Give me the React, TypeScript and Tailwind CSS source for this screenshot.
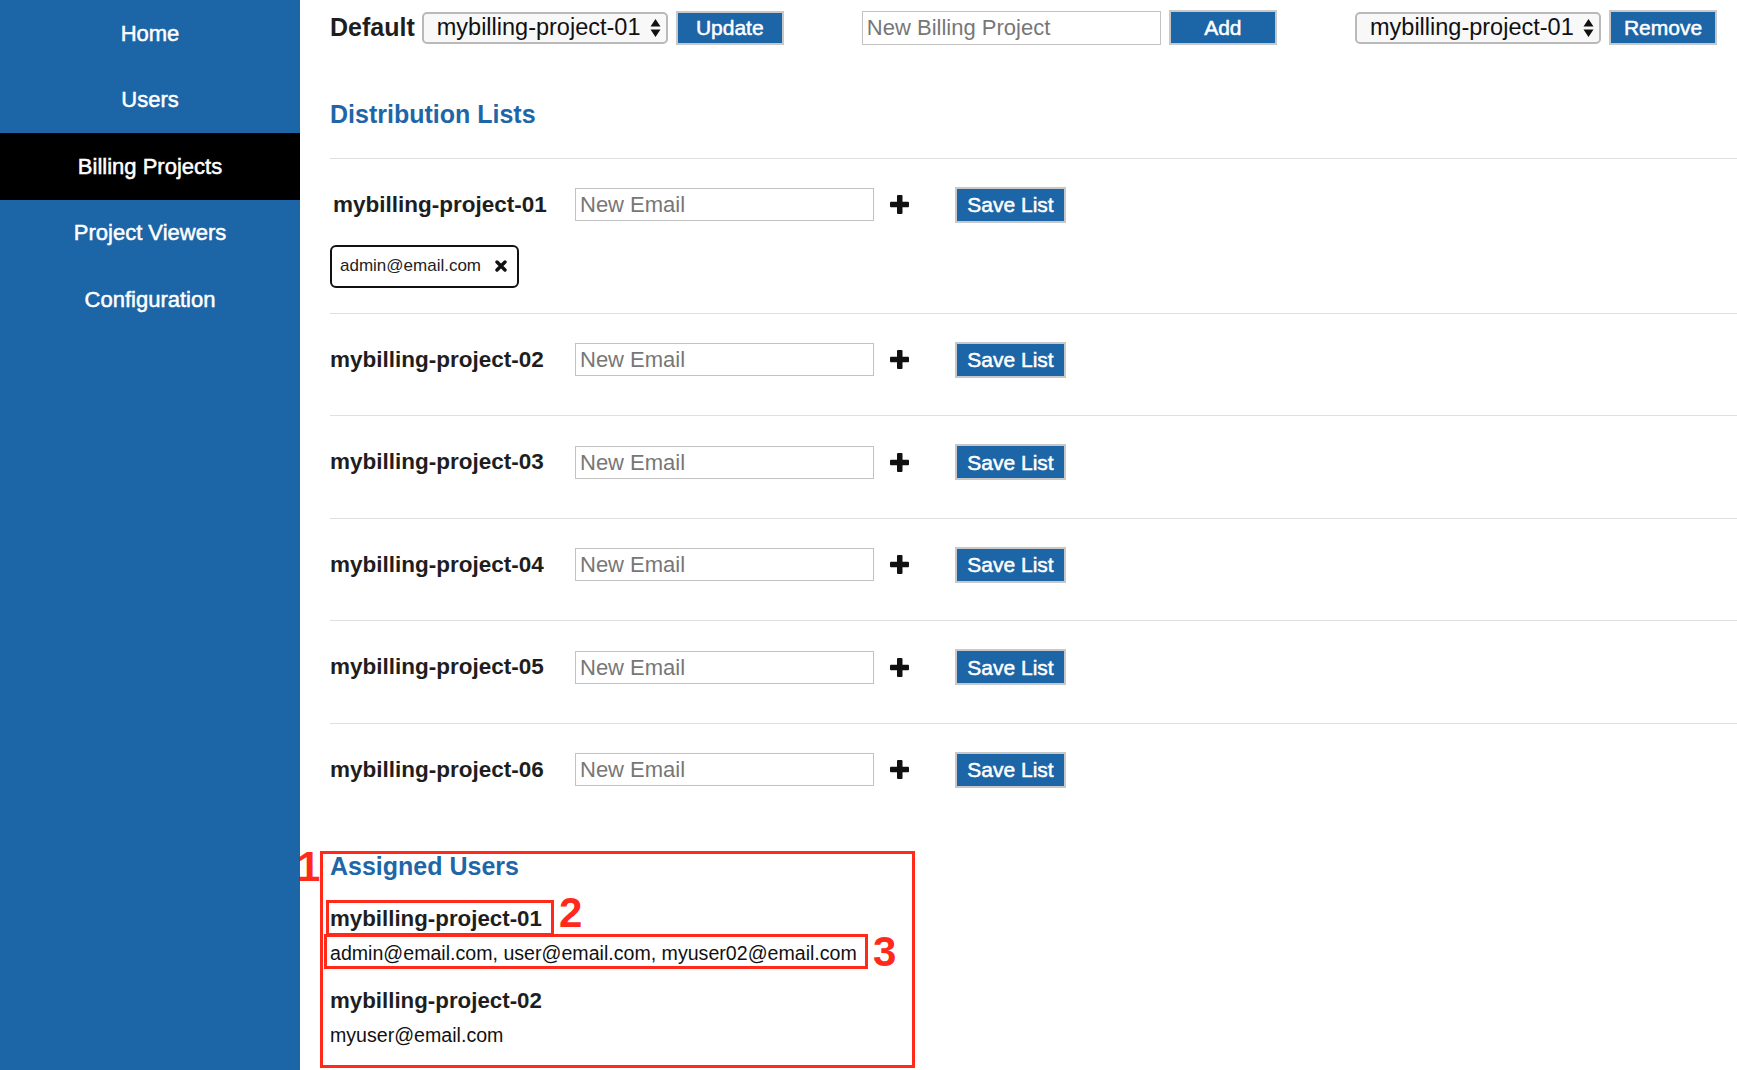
import React from "react";

const nav = ["Home", "Users", "Billing Projects", "Project Viewers", "Configuration"];
const projects = [
  "mybilling-project-01",
  "mybilling-project-02",
  "mybilling-project-03",
  "mybilling-project-04",
  "mybilling-project-05",
  "mybilling-project-06",
];

function SelectBox() {
  return (
    <div className="flex h-[32px] w-[246px] items-center rounded-[5px] border-2 border-[#b9b9b9] bg-[#f8f8f8] pl-[13px] pr-[5px] text-[23.5px] text-[#111]">
      <span className="flex-1 leading-none">mybilling-project-01</span>
      <svg width="11" height="20" viewBox="0 0 11 20">
        <path d="M5.5 1 L10.5 8.5 H0.5 Z M5.5 19 L10.5 11.5 H0.5 Z" fill="#111" />
      </svg>
    </div>
  );
}

function BlueButton({ label, w, h }: { label: string; w: string; h: string }) {
  return (
    <button
      className={`${w} ${h} flex items-center justify-center border-2 border-[#c8c8c8] bg-[#1c65a6] text-[21px] leading-none text-white [-webkit-text-stroke:0.5px_white]`}
    >
      {label}
    </button>
  );
}

function PlusIcon() {
  return (
    <svg width="19" height="19" viewBox="0 0 19 19" className="ml-[16px] shrink-0">
      <rect x="7" y="0" width="5.5" height="19" rx="1" fill="#111" />
      <rect x="0" y="6.8" width="19" height="5.5" rx="1" fill="#111" />
    </svg>
  );
}

function Chip({ email }: { email: string }) {
  return (
    <div className="flex h-[43px] w-[189px] items-center rounded-[6px] border-2 border-[#111] pl-[8px] pr-[10px] text-[17px] text-[#222]">
      <span className="flex-1">{email}</span>
      <svg width="12" height="12" viewBox="0 0 12 12">
        <path d="M2 2 L10 10 M10 2 L2 10" stroke="#111" strokeWidth="3.4" strokeLinecap="round" />
      </svg>
    </div>
  );
}

function ListRow({ name, chips }: { name: string; chips?: string[] }) {
  return (
    <div className={`border-t border-[#e0e0e0] pt-[28px] ${chips ? "pb-[25px]" : "pb-[37.5px]"}`}>
      <div className="flex h-[36px] items-center">
        <div className={`w-[245px] text-[22.5px] font-bold text-[#1e1e1e] ${chips ? "pl-[3px]" : ""}`}>{name}</div>
        <input
          placeholder="New Email"
          className="h-[33px] w-[299px] border border-[#c2c2c2] bg-white px-[4px] text-[22px] outline-none placeholder:text-[#777]"
        />
        <PlusIcon />
        <div className="ml-[46px]">
          <BlueButton label="Save List" w="w-[111px]" h="h-[36px]" />
        </div>
      </div>
      {chips && (
        <div className="mt-[22px] flex gap-2">
          {chips.map((c) => (
            <Chip key={c} email={c} />
          ))}
        </div>
      )}
    </div>
  );
}

export default function App() {
  return (
    <div className="flex min-h-screen bg-white font-['Liberation_Sans',Arial,sans-serif] text-[#111]">
      <aside className="w-[300px] shrink-0 bg-[#1c65a6]">
        {nav.map((n) => (
          <div
            key={n}
            className={`flex h-[66.5px] items-center justify-center text-[22px] text-white [-webkit-text-stroke:0.5px_white] ${
              n === "Billing Projects" ? "bg-black" : ""
            }`}
          >
            {n}
          </div>
        ))}
      </aside>

      <main className="flex-1 pl-[30px]">
        <div className="flex h-[35px] items-center justify-between pr-[20px] mt-[10px]">
          <div className="flex items-center">
            <span className="mr-[7px] text-[25px] font-bold leading-none text-[#1e1e1e]">Default</span>
            <SelectBox />
            <div className="ml-[8px]">
              <BlueButton label="Update" w="w-[108px]" h="h-[34px]" />
            </div>
          </div>
          <div className="flex items-center">
            <input
              placeholder="New Billing Project"
              className="h-[34px] w-[299px] border border-[#c2c2c2] bg-white px-[4px] text-[22px] outline-none placeholder:text-[#777]"
            />
            <div className="ml-[8px]">
              <BlueButton label="Add" w="w-[108px]" h="h-[35px]" />
            </div>
          </div>
          <div className="flex items-center">
            <SelectBox />
            <div className="ml-[8px]">
              <BlueButton label="Remove" w="w-[108px]" h="h-[35px]" />
            </div>
          </div>
        </div>

        <h2 className="mb-[29px] mt-[53.5px] text-[25px] font-bold leading-[30px] text-[#1e66a8]">Distribution Lists</h2>

        {projects.map((p, i) => (
          <ListRow key={p} name={p} chips={i === 0 ? ["admin@email.com"] : undefined} />
        ))}

        <section className="relative mt-[25.5px] h-[217px]">
          <h2 className="text-[25px] font-bold leading-[30px] text-[#1e66a8]">Assigned Users</h2>
          <div className="mt-[25px] text-[22.3px] font-bold leading-[26px] text-[#1e1e1e]">mybilling-project-01</div>
          <div className="mt-[9px] text-[19.6px] leading-[24px] text-[#111]">
            admin@email.com, user@email.com, myuser02@email.com
          </div>
          <div className="mt-[23px] text-[22.3px] font-bold leading-[26px] text-[#1e1e1e]">mybilling-project-02</div>
          <div className="mt-[9px] text-[19.6px] leading-[24px] text-[#111]">myuser@email.com</div>

          {/* annotation overlays */}
          <div className="pointer-events-none absolute left-[-10px] top-0 h-[217px] w-[595px] border-[3px] border-[#ff2a1a]" />
          <div className="pointer-events-none absolute left-[-4px] top-[49px] h-[36px] w-[228px] border-[3px] border-[#ff2a1a]" />
          <div className="pointer-events-none absolute left-[-6px] top-[83px] h-[35px] w-[544px] border-[3px] border-[#ff2a1a]" />
          <span className="absolute left-[-33px] top-0 text-[42px] font-bold leading-[31px] text-[#ff2a1a]">1</span>
          <span className="absolute left-[229px] top-[46px] text-[42px] font-bold leading-[31px] text-[#ff2a1a]">2</span>
          <span className="absolute left-[543px] top-[85px] text-[42px] font-bold leading-[31px] text-[#ff2a1a]">3</span>
        </section>
      </main>
    </div>
  );
}
